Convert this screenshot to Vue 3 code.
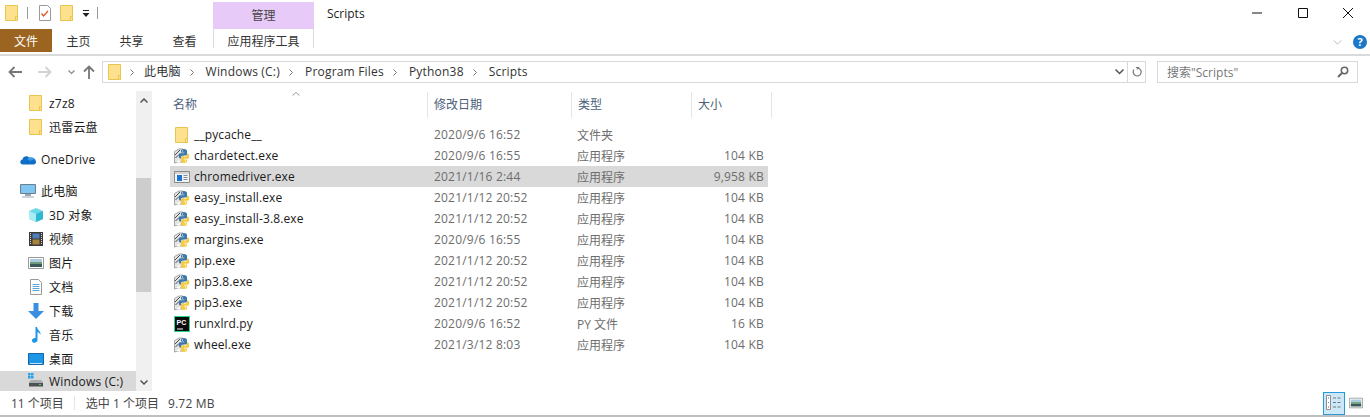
<script setup>
const crumbs = ['此电脑', 'Windows (C:)', 'Program Files', 'Python38', 'Scripts']

const navItems = [
  { label: 'z7z8', icon: 'folder', indent: true },
  { label: '迅雷云盘', icon: 'folder', indent: true, last: true },
  { label: 'OneDrive', icon: 'cloud', last: true },
  { label: '此电脑', icon: 'pc' },
  { label: '3D 对象', icon: 'cube', indent: true },
  { label: '视频', icon: 'film', indent: true },
  { label: '图片', icon: 'picture', indent: true },
  { label: '文档', icon: 'doc', indent: true },
  { label: '下载', icon: 'down', indent: true },
  { label: '音乐', icon: 'note', indent: true },
  { label: '桌面', icon: 'desk', indent: true },
  { label: 'Windows (C:)', icon: 'drive', indent: true, active: true }
]

const files = [
  { name: '__pycache__', date: '2020/9/6 16:52', type: '文件夹', size: '', icon: 'folder' },
  { name: 'chardetect.exe', date: '2020/9/6 16:55', type: '应用程序', size: '104 KB', icon: 'python' },
  { name: 'chromedriver.exe', date: '2021/1/16 2:44', type: '应用程序', size: '9,958 KB', icon: 'window', selected: true },
  { name: 'easy_install.exe', date: '2021/1/12 20:52', type: '应用程序', size: '104 KB', icon: 'python' },
  { name: 'easy_install-3.8.exe', date: '2021/1/12 20:52', type: '应用程序', size: '104 KB', icon: 'python' },
  { name: 'margins.exe', date: '2020/9/6 16:55', type: '应用程序', size: '104 KB', icon: 'python' },
  { name: 'pip.exe', date: '2021/1/12 20:52', type: '应用程序', size: '104 KB', icon: 'python' },
  { name: 'pip3.8.exe', date: '2021/1/12 20:52', type: '应用程序', size: '104 KB', icon: 'python' },
  { name: 'pip3.exe', date: '2021/1/12 20:52', type: '应用程序', size: '104 KB', icon: 'python' },
  { name: 'runxlrd.py', date: '2020/9/6 16:52', type: 'PY 文件', size: '16 KB', icon: 'pycharm' },
  { name: 'wheel.exe', date: '2021/3/12 8:03', type: '应用程序', size: '104 KB', icon: 'python' }
]
</script>

<template>
  <div class="explorer">
    <svg class="defs" width="0" height="0">
      <defs>
        <symbol id="folder" viewBox="0 0 16 16">
          <path d="M1.500 .5h12v15h-12z" fill="#fde18e" stroke="#e9c44f" />
          <path d="M11.500 11.500h2v4h-2z" fill="#fde18e" stroke="#e9c44f" />
        </symbol>
        <symbol id="python" viewBox="0 0 16 16">
          <path d="M.5 3.500L5 1h4v13H4l-3.500 1z" fill="#e4e4e4" stroke="#a5a5a5" />
          <path d="M1 7l5-5M1.500 10L5 6.500" stroke="#4a4a4a" fill="none" />
          <path d="M1.500 14L6 12v2.500z" fill="#fff" />
          <path d="M10 1C7.500 1 7 2 7 3V4.500h3.200v.7H6C5 5.200 4.800 6.500 4.800 8s.5 2.500 1.500 2.500H7V9c0-1 1-1.500 2-1.500h2.500c1 0 1.500-.5 1.500-1.500V3c0-1-1-2-3-2z" fill="#3c78aa" />
          <path d="M8 2.500h1v1H8z" fill="#fff" />
          <path d="M10 15c2.500 0 3-1 3-2v-1.500H9.800v-.7H14c1 0 1.200-1.300 1.200-2.800s-.5-2.500-1.500-2.500H13V7c0 1-1 1.500-2 1.500H8.500C7.500 8.500 7 9 7 10v3c0 1 1 2 3 2z" fill="#f7cb3f" />
          <path d="M11 12.500h1v1h-1z" fill="#fff" />
        </symbol>
        <symbol id="window" viewBox="0 0 16 16">
          <path d="M.5 2.500h15v11H.5z" fill="#f4f4f4" stroke="#8a8a8a" />
          <path d="M1 3h14v2H1z" fill="#d4d4d4" />
          <path d="M3 6h5v6H3z" fill="#1b74d3" />
          <path d="M9.500 6.500h4M9.500 8.500h4M9.500 10.500h4" stroke="#7d8b99" />
        </symbol>
        <symbol id="pycharm" viewBox="0 0 16 16">
          <path d="M.5 .5h15v15H.5z" fill="#0b0b0b" stroke="#21d789" />
          <path d="M3 12.500h6v1H3z" fill="#fff" />
          <text x="2.500" y="9" font-size="7" font-weight="700" font-family="Liberation Sans" fill="#fff">PC</text>
        </symbol>
        <symbol id="cloud" viewBox="0 0 16 16">
          <path d="M3 13.500c-3.500 0-3.500-4.500-.5-5 .5-3 5-4.500 7-1.500 3-1 6.500 .500 6.500 4 0 1.500-1 2.500-2.500 2.500z" fill="#0f6fc6" />
          <path d="M9.500 6.500c2-.8 4.500 0 5 2-1.500 0-3 .5-4 1.500-1-.2-1.500-1-3-1.500 0-1 1-2 2-2z" fill="#3a9be8" />
        </symbol>
        <symbol id="pc" viewBox="0 0 16 16">
          <path d="M.5 1.500h15v9H.5z" fill="#7fc6f2" stroke="#6b7f8f" />
          <path d="M5 11h6v2H5zM2 13.500h12v1H2z" fill="#9aa9b5" />
        </symbol>
        <symbol id="cube" viewBox="0 0 16 16">
          <path d="M8 1l7 3v8l-7 3-7-3V4z" fill="#6fd8e8" />
          <path d="M1 4l7 3v8l-7-3z" fill="#a9ecf4" />
          <path d="M8 7l7-3v8l-7 3z" fill="#2fb6d0" />
        </symbol>
        <symbol id="film" viewBox="0 0 16 16">
          <path d="M1 1h14v14H1z" fill="#3a3a3a" />
          <path d="M4.500 2.500h7v5h-7z" fill="#4e7fb8" />
          <path d="M4.500 8.500h7v5h-7z" fill="#a8843c" />
          <path d="M2.500 2v12M13.500 2v12" stroke="#ddd" stroke-dasharray="1 1" />
        </symbol>
        <symbol id="picture" viewBox="0 0 16 16">
          <path d="M.5 2.500h15v11H.5z" fill="#fff" stroke="#9a9a9a" />
          <path d="M2 4h12v3H2z" fill="#a9cce0" />
          <path d="M2 7h12v2H2z" fill="#6e9a7a" />
          <path d="M2 9h12v3H2z" fill="#3d5a5a" />
        </symbol>
        <symbol id="doc" viewBox="0 0 16 16">
          <path d="M2.500 .5h8l3 3v12h-11z" fill="#fff" stroke="#9a9a9a" />
          <path d="M4.500 5.500h7M4.500 7.500h7M4.500 9.500h7M4.500 11.500h7" stroke="#5aa6dc" />
        </symbol>
        <symbol id="down" viewBox="0 0 16 16">
          <path d="M5.500 0h5v8H16l-8 8-8-8h5.500z" fill="#3a8fe0" />
        </symbol>
        <symbol id="note" viewBox="0 0 16 16">
          <path d="M7.500 0H9c.3 3 4 4 3.500 8-.4-1.500-1.500-2.500-3-3v8c0 3-5 4-5.500 1-.3-2.500 2-3.500 3.500-3z" fill="#1e96e8" />
        </symbol>
        <symbol id="desk" viewBox="0 0 16 16">
          <path d="M.5 2.500h15v11H.5z" fill="#1e96e8" stroke="#1565a8" />
          <path d="M2 12.500h12" stroke="#bfe3fa" />
        </symbol>
        <symbol id="drive" viewBox="0 0 16 16">
          <path d="M0 0h2.500v2.500H0zM3 0h2.500v2.500H3zM0 3h2.500v2.500H0zM3 3h2.500v2.500H3z" fill="#22a2e8" />
          <path d="M1 9l2-2h10l2 2v4H1z" fill="#a8adb0" />
          <path d="M1 10h14v3.500H1z" fill="#4c5154" />
          <path d="M11 11h2v1h-2z" fill="#5fd25f" />
        </symbol>
        <symbol id="mag" viewBox="0 0 12 12">
          <circle cx="7.500" cy="4.500" r="3.200" fill="none" stroke="#666" stroke-width="1.500" />
          <path d="M5 7l-4 4" stroke="#666" stroke-width="2" />
        </symbol>
      </defs>
    </svg>

    <div class="title-row">
      <div class="quick">
        <svg class="ico"><use href="#folder" /></svg>
        <i class="sep"></i>
        <svg class="ico" viewBox="0 0 16 16">
          <path d="M2.500 .5h8l3 3v12h-11z" fill="#fff" stroke="#9a9a9a" />
          <path d="M4.500 8.500l2 2.500 4.500-5" fill="none" stroke="#e2552b" stroke-width="1.300" />
        </svg>
        <svg class="ico"><use href="#folder" /></svg>
        <svg class="qa-drop" viewBox="0 0 8 7">
          <path d="M1 .5h6" stroke="#222" />
          <path d="M.5 3h7L4 7z" fill="#222" />
        </svg>
        <i class="sep"></i>
      </div>
      <div class="context-head">管理</div>
      <div class="win-title">Scripts</div>
      <div class="win-btns">
        <svg viewBox="0 0 10 10"><path d="M0 5h10" stroke="#111" /></svg>
        <svg viewBox="0 0 10 10"><path d="M.5 .5h9v9h-9z" fill="none" stroke="#111" /></svg>
        <svg viewBox="0 0 10 10"><path d="M0 0l10 10M10 0L0 10" stroke="#111" /></svg>
      </div>
    </div>

    <div class="tab-row">
      <div class="tab tab-file">文件</div>
      <div class="tab">主页</div>
      <div class="tab">共享</div>
      <div class="tab">查看</div>
      <div class="tab tab-context">应用程序工具</div>
      <svg class="ribbon-toggle" viewBox="0 0 10 6"><path d="M.5 .5L5 5 9.500 .5" fill="none" stroke="#aaa" /></svg>
      <div class="help">?</div>
    </div>

    <div class="address-row">
      <div class="nav-btns">
        <svg class="arrow" viewBox="0 0 14 12"><path d="M14 6H2M6.500 1L1.500 6l5 5" fill="none" stroke="#777" stroke-width="1.800" /></svg>
        <svg class="arrow faint" viewBox="0 0 14 12"><path d="M0 6h12M7.500 1l5 5-5 5" fill="none" stroke="#d2d2d2" stroke-width="1.800" /></svg>
        <svg class="mini" viewBox="0 0 7 5"><path d="M.5 .5L3.500 3.500 6.500 .5" fill="none" stroke="#888" stroke-width="1.200" /></svg>
        <svg class="up" viewBox="0 0 12 14"><path d="M6 14V2M1 6.500l5-5 5 5" fill="none" stroke="#777" stroke-width="1.800" /></svg>
      </div>
      <div class="address">
        <svg class="ico addr-ico"><use href="#folder" /></svg>
        <template v-for="(c, i) in crumbs" :key="c">
          <svg class="crumb-sep" :class="{ first: i === 0 }" viewBox="0 0 4 7"><path d="M.5 .5l3 3-3 3" fill="none" stroke="#777" /></svg>
          <span class="crumb">{{ c }}</span>
        </template>
        <svg class="addr-drop" viewBox="0 0 9 6"><path d="M.5 .5l4 4 4-4" fill="none" stroke="#555" stroke-width="1.500" /></svg>
        <div class="refresh">
          <svg viewBox="0 0 10 12"><path d="M4 1.500h2.500L5 3.500M6.500 2.200A4 4 0 1 1 2 3.500" fill="none" stroke="#777" stroke-width="1.200" /></svg>
        </div>
      </div>
      <div class="search">
        <span>搜索"Scripts"</span>
        <svg class="mag"><use href="#mag" /></svg>
      </div>
    </div>

    <div class="body">
      <div class="sidebar">
        <div
          v-for="item in navItems"
          :key="item.label"
          class="nav-item"
          :class="{ indent: item.indent, active: item.active, last: item.last }"
        >
          <svg class="ico"><use :href="'#' + item.icon" /></svg>
          <span>{{ item.label }}</span>
        </div>
      </div>
      <div class="scrollbar">
        <svg class="sb-arrow" viewBox="0 0 8 5"><path d="M.5 4.500L4 1l3.500 3.500" fill="none" stroke="#555" stroke-width="1.500" /></svg>
        <div class="sb-track"><div class="sb-thumb"></div></div>
        <svg class="sb-arrow" viewBox="0 0 8 5"><path d="M.5 .5L4 4l3.500-3.500" fill="none" stroke="#555" stroke-width="1.500" /></svg>
      </div>
      <div class="list">
        <div class="list-head">
          <div class="col-h col-h-name">名称<svg class="sort" viewBox="0 0 8 4"><path d="M.5 3.500L4 .5l3.500 3" fill="none" stroke="#999" /></svg></div>
          <div class="col-h col-h-date">修改日期</div>
          <div class="col-h col-h-type">类型</div>
          <div class="col-h col-h-size">大小</div>
        </div>
        <div class="rows">
          <div v-for="f in files" :key="f.name" class="row" :class="{ selected: f.selected }">
            <div class="c-name">
              <svg class="ico"><use :href="'#' + f.icon" /></svg>
              <span>{{ f.name }}</span>
            </div>
            <div class="c-date">{{ f.date }}</div>
            <div class="c-type">{{ f.type }}</div>
            <div class="c-size">{{ f.size }}</div>
          </div>
        </div>
      </div>
    </div>

    <div class="status">
      <span>11 个项目</span>
      <i class="status-sep"></i>
      <span>选中 1 个项目</span>
      <span class="status-size">9.72 MB</span>
      <div class="views">
        <div class="view view-on">
          <svg viewBox="0 0 18 18">
            <path d="M1.500 1.500h4v14h-4z" fill="#fff" stroke="#8f8f8f" />
            <path d="M3 3.500h1v1H3z" fill="#666" />
            <path d="M3 8h1v1H3z" fill="#3a9be8" />
            <path d="M3 12.500h1v1H3z" fill="#c23a3a" />
            <path d="M8 4h3M12.500 4h3M8 8.500h3M12.500 8.500h3M8 13h3M12.500 13h3" stroke="#777" />
          </svg>
        </div>
        <svg class="view-thumb"><use href="#picture" /></svg>
      </div>
    </div>
  </div>
</template>

<style scoped>
.explorer {
  width: 1370px;
  height: 417px;
  display: flex;
  flex-direction: column;
  overflow: hidden;
  background: #fff;
  font-family: "Open Sans", "Noto Sans CJK SC", sans-serif;
  font-size: 12px;
  color: #1a1a1a;
  border-bottom: 2px solid #bfbfbf;
  box-sizing: border-box;
}

.defs {
  position: absolute;
}

.ico {
  width: 16px;
  height: 16px;
  flex: none;
}

.title-row {
  height: 29px;
  display: flex;
  align-items: flex-start;
  flex: none;
}

.quick {
  width: 213px;
  height: 26px;
  display: flex;
  align-items: center;
  padding-left: 4px;
  box-sizing: border-box;
}

.quick .sep {
  width: 1px;
  height: 12px;
  background: #999;
  margin: 0 9px 0 7px;
}

.quick .ico + .ico {
  margin-left: 6px;
}

.qa-drop {
  width: 8px;
  height: 7px;
  margin-left: 7px;
}

.context-head {
  width: 101px;
  height: 27px;
  margin-top: 2px;
  background: #e8caf9;
  text-align: center;
  line-height: 27px;
  color: #444;
}

.win-title {
  margin-left: 13px;
  line-height: 28px;
  color: #222;
}

.win-btns {
  margin-left: auto;
  width: 101px;
  padding: 8px 17px 0 0;
  display: flex;
  justify-content: space-between;
}

.win-btns svg {
  width: 10px;
  height: 10px;
}

.tab-row {
  height: 25px;
  display: flex;
  align-items: flex-start;
  flex: none;
  border-bottom: 2px solid #dadada;
}

.tab {
  width: 53px;
  height: 23px;
  line-height: 25px;
  text-align: center;
  color: #333;
}

.tab-file {
  width: 52px;
  background: #9b6420;
  color: #fff;
}

.tab-context {
  width: 99px;
  height: 19px;
  margin-left: 2px;
  border: 1px solid #dadada;
  border-width: 0 1px;
}

.ribbon-toggle {
  width: 9px;
  height: 5px;
  margin: 11px 0 0 auto;
}

.help {
  width: 14px;
  height: 14px;
  margin: 6px 3px 0 11px;
  border-radius: 50%;
  background: #1a78c8;
  color: #fff;
  font-size: 11px;
  font-weight: 700;
  line-height: 14px;
  text-align: center;
}

.address-row {
  height: 32px;
  flex: none;
  display: flex;
  align-items: center;
  padding-right: 12px;
  box-sizing: border-box;
}

.nav-btns {
  width: 102px;
  display: flex;
  align-items: center;
  padding-left: 8px;
  box-sizing: border-box;
}

.arrow {
  width: 14px;
  height: 12px;
  margin-right: 16px;
}

.mini {
  width: 7px;
  height: 5px;
  margin-right: 8px;
}

.up {
  width: 12px;
  height: 14px;
}

.address {
  width: 1044px;
  height: 22px;
  border: 1px solid #d9d9d9;
  box-sizing: border-box;
  display: flex;
  align-items: center;
  padding-left: 4px;
  color: #333;
}

.crumb-sep {
  width: 4px;
  height: 7px;
  margin: 0 12px 0 9px;
}

.crumb-sep.first {
  margin: 0 10px 0 7px;
}

.crumb {
  letter-spacing: .2px;
  padding-bottom: 2px;
}

.addr-drop {
  width: 9px;
  height: 6px;
  margin-left: auto;
  margin-right: 3px;
}

.refresh {
  width: 18px;
  height: 20px;
  border-left: 1px solid #d9d9d9;
  display: flex;
  align-items: center;
  justify-content: center;
  box-sizing: border-box;
}

.refresh svg {
  width: 10px;
  height: 12px;
}

.search {
  width: 201px;
  height: 22px;
  margin-left: 11px;
  border: 1px solid #d9d9d9;
  box-sizing: border-box;
  display: flex;
  align-items: center;
  justify-content: space-between;
  padding: 0 8px 0 9px;
  color: #777;
}

.mag {
  width: 12px;
  height: 12px;
}

.body {
  flex: 1;
  min-height: 0;
  display: flex;
}

.sidebar {
  width: 136px;
  flex: none;
  overflow: hidden;
  display: flex;
  flex-direction: column;
  justify-content: flex-end;
}

.nav-item {
  height: 24px;
  flex: none;
  display: flex;
  align-items: center;
  gap: 5px;
  padding-left: 20px;
  color: #1a1a1a;
  letter-spacing: .2px;
}

.nav-item.indent {
  padding-left: 28px;
}

.nav-item.last {
  margin-bottom: 8px;
}

.nav-item.active {
  height: 20px;
  background: #d9d9d9;
}

.scrollbar {
  width: 16px;
  flex: none;
  margin-top: 3px;
  background: #f0f0f0;
  display: flex;
  flex-direction: column;
  align-items: center;
}

.sb-arrow {
  width: 8px;
  height: 5px;
  margin: 7px 0 6px;
  flex: none;
}

.sb-track {
  flex: 1;
  width: 100%;
}

.sb-thumb {
  width: 15px;
  height: 114px;
  margin-top: 69px;
  background: #cdcdcd;
}

.list {
  flex: 1;
  padding-left: 13px;
  display: flex;
  flex-direction: column;
}

.list-head {
  height: 26px;
  display: flex;
  margin-top: 4px;
  color: #4c607a;
}

.col-h {
  line-height: 26px;
  border-right: 1px solid #e5e5e5;
  box-sizing: border-box;
  position: relative;
}

.col-h-name {
  width: 263px;
  padding-left: 8px;
}

.col-h-date {
  width: 144px;
  padding-left: 6px;
}

.col-h-type {
  width: 120px;
  padding-left: 6px;
}

.col-h-size {
  width: 80px;
  padding-left: 6px;
}

.sort {
  position: absolute;
  left: 127px;
  top: 0;
  width: 8px;
  height: 4px;
}

.rows {
  margin: 6px 0 0 5px;
  width: 598px;
}

.row {
  height: 21px;
  display: flex;
  align-items: center;
  color: #6d6d6d;
}

.row.selected {
  background: #d9d9d9;
}

.c-name {
  width: 258px;
  padding-left: 4px;
  display: flex;
  align-items: center;
  gap: 4px;
  box-sizing: border-box;
  color: #1a1a1a;
  letter-spacing: .12px;
}

.c-date {
  width: 149px;
  padding-left: 6px;
  box-sizing: border-box;
  letter-spacing: .2px;
}

.c-type {
  width: 114px;
}

.c-size {
  width: 73px;
  text-align: right;
  letter-spacing: .2px;
}

.status {
  height: 24px;
  flex: none;
  display: flex;
  align-items: center;
  padding-left: 11px;
  color: #444;
}

.status-sep {
  width: 1px;
  height: 14px;
  background: #e5e5e5;
  margin: 0 11px 0 10px;
}

.status-size {
  margin-left: 9px;
  letter-spacing: .2px;
}

.views {
  margin-left: auto;
  display: flex;
  align-items: center;
  gap: 4px;
  padding-right: 7px;
}

.view-on {
  width: 22px;
  height: 23px;
  box-sizing: border-box;
  background: #cce8f8;
  border: 1px solid #2a9ad6;
  display: flex;
  align-items: center;
  justify-content: center;
}

.view-on svg {
  width: 18px;
  height: 18px;
}

.view-thumb {
  width: 14px;
  height: 14px;
}
</style>

<style>
html,
body {
  margin: 0;
  overflow: hidden;
}
</style>
